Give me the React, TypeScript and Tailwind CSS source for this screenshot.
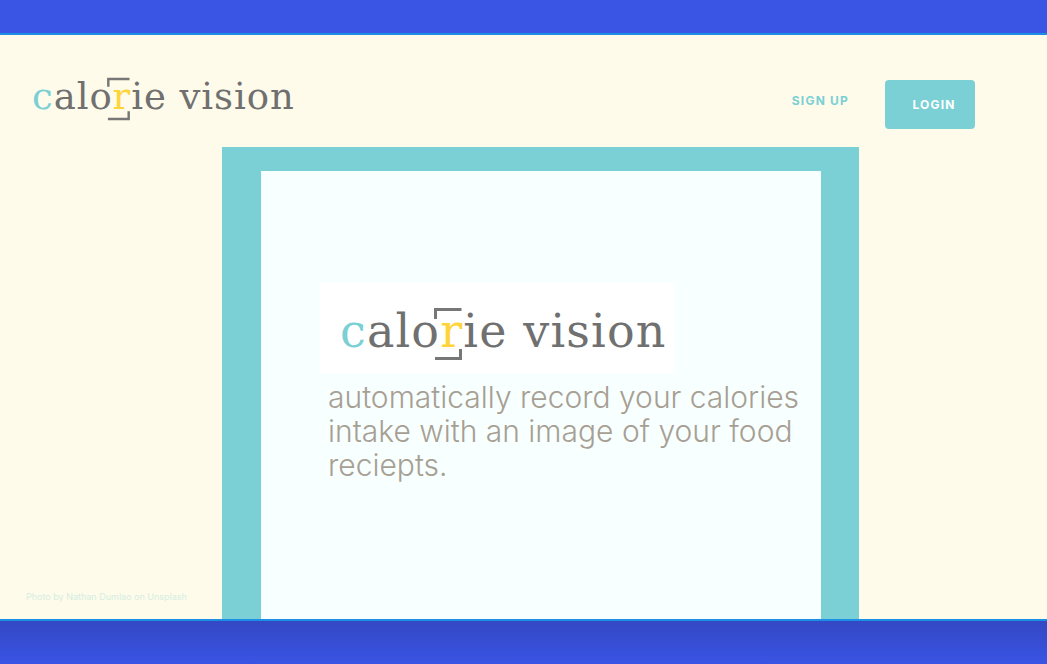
type LogoProps = { large?: boolean };

function Logo({ large = false }: LogoProps) {
  return (
    <span
      className={
        large
          ? "whitespace-nowrap font-['DejaVu_Serif',serif] text-[46px] leading-[60px] tracking-wide text-[#707070]"
          : "whitespace-nowrap font-['DejaVu_Serif',serif] text-[37px] leading-[48px] tracking-wide text-[#707070]"
      }
    >
      <span className="text-[#7ad0d4]">c</span>alo
      <span className="relative inline-block text-[#ffd43b]">
        r
        <svg
          aria-hidden="true"
          viewBox="0 0 28 54"
          fill="none"
          stroke="#777777"
          strokeWidth="3"
          className={
            large
              ? "absolute -left-1.5 top-1.5 h-[54px] w-[28px]"
              : "absolute -left-1.5 top-1 h-[44px] w-[23px]"
          }
        >
          <path d="M1.5 12V2.5H27.5M1 51.5H26.5V42" />
        </svg>
      </span>
      ie vision
    </span>
  );
}

export default function App() {
  return (
    <div className="flex min-h-screen flex-col bg-[#3a54e4] font-['Inter',sans-serif]">
      <div className="h-[33px]" />
      <main className="flex flex-1 flex-col border-y-2 border-[#1a8fe3] bg-[#fffbea]">
        <header className="flex h-28 items-start justify-between pl-8 pr-[72px]">
          <a href="#home" className="mt-[38px]">
            <Logo />
          </a>
          <nav className="mt-[45px] flex items-start gap-9">
            <a href="#signup" className="mt-3 text-xs leading-[18px] font-bold tracking-widest text-[#7ad0d4]">
              SIGN UP
            </a>
            <button
              type="button"
              className="h-[49px] w-[90px] rounded bg-[#7ad0d4] pl-2 text-xs font-bold tracking-widest text-white"
            >
              LOGIN
            </button>
          </nav>
        </header>
        <div className="grid flex-1 grid-cols-[222fr_637fr_188fr]">
          <footer className="flex items-end whitespace-nowrap pb-4 pl-[26px] text-[9px] leading-3 text-[#d3eee2]">
            Photo by Nathan Dumlao on Unsplash
          </footer>
          <section className="flex bg-[#7ad0d4] pl-[39px] pr-[38px] pt-6">
            <div className="flex-1 bg-[#f8ffff] pl-[59px] pt-[112px]">
              <h1 className="flex h-[90px] w-[355px] items-center bg-white pl-5 pt-1.5">
                <Logo large />
              </h1>
              <p className="mt-[7px] whitespace-nowrap pl-2 text-[30px] leading-[34px] font-light text-[#a79f94]">
                automatically record your calories
                <br />
                intake with an image of your food
                <br />
                reciepts.
              </p>
            </div>
          </section>
        </div>
      </main>
      <div className="h-[43px] bg-linear-to-b from-[#3348c4] to-[#3a54e4]" />
    </div>
  );
}
